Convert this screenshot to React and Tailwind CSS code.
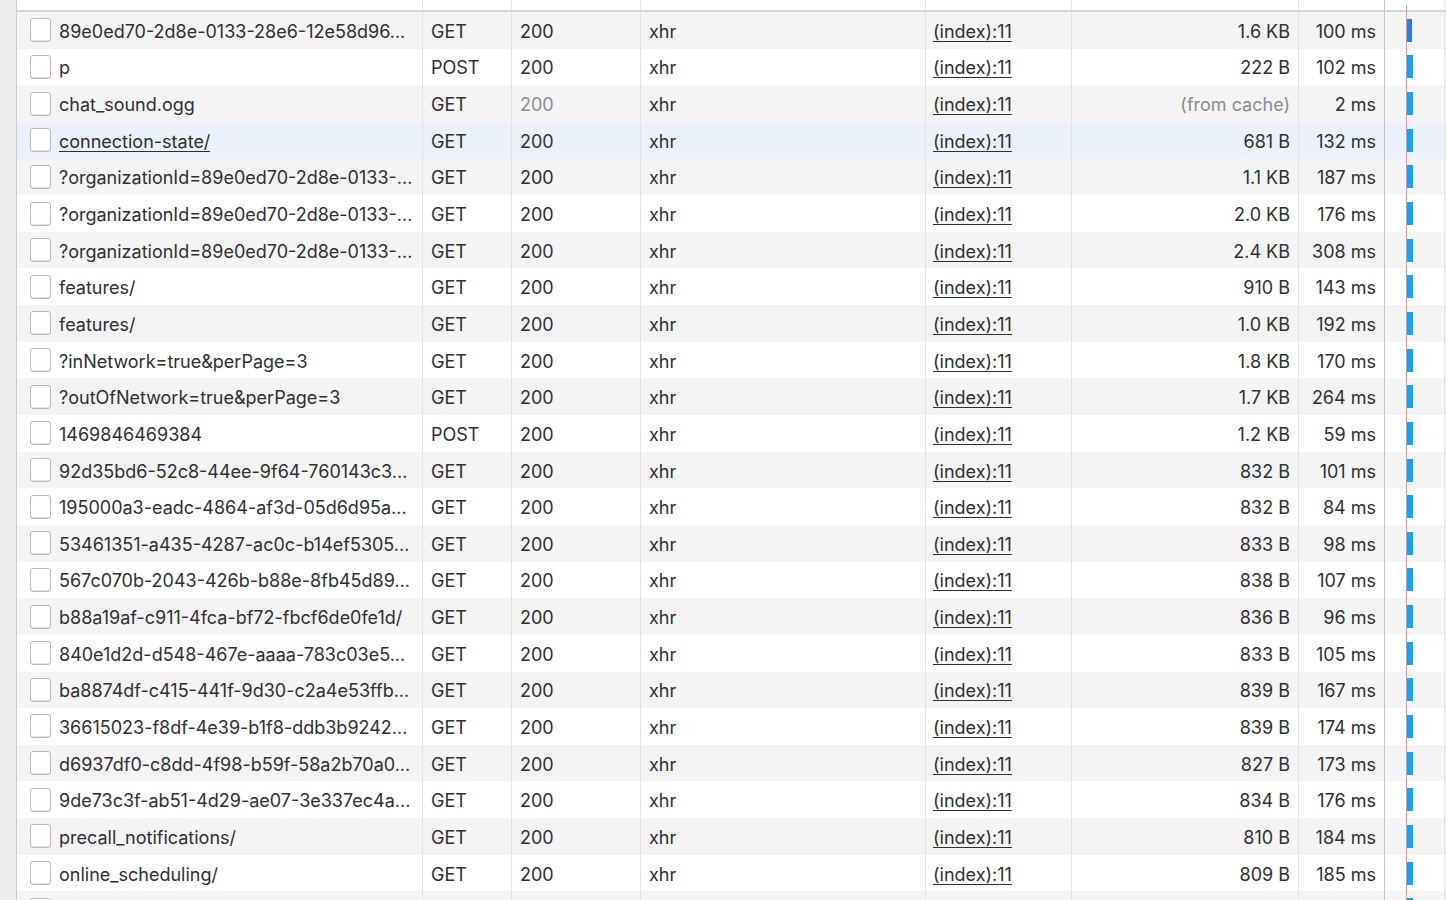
import React from "react";

const rows = [
  ["89e0ed70-2d8e-0133-28e6-12e58d96...", "GET", "200", "1.6 KB", "100 ms"],
  ["p", "POST", "200", "222 B", "102 ms"],
  ["chat_sound.ogg", "GET", "200", "(from cache)", "2 ms"],
  ["connection-state/", "GET", "200", "681 B", "132 ms"],
  ["?organizationId=89e0ed70-2d8e-0133-...", "GET", "200", "1.1 KB", "187 ms"],
  ["?organizationId=89e0ed70-2d8e-0133-...", "GET", "200", "2.0 KB", "176 ms"],
  ["?organizationId=89e0ed70-2d8e-0133-...", "GET", "200", "2.4 KB", "308 ms"],
  ["features/", "GET", "200", "910 B", "143 ms"],
  ["features/", "GET", "200", "1.0 KB", "192 ms"],
  ["?inNetwork=true&perPage=3", "GET", "200", "1.8 KB", "170 ms"],
  ["?outOfNetwork=true&perPage=3", "GET", "200", "1.7 KB", "264 ms"],
  ["1469846469384", "POST", "200", "1.2 KB", "59 ms"],
  ["92d35bd6-52c8-44ee-9f64-760143c3...", "GET", "200", "832 B", "101 ms"],
  ["195000a3-eadc-4864-af3d-05d6d95a...", "GET", "200", "832 B", "84 ms"],
  ["53461351-a435-4287-ac0c-b14ef5305...", "GET", "200", "833 B", "98 ms"],
  ["567c070b-2043-426b-b88e-8fb45d89...", "GET", "200", "838 B", "107 ms"],
  ["b88a19af-c911-4fca-bf72-fbcf6de0fe1d/", "GET", "200", "836 B", "96 ms"],
  ["840e1d2d-d548-467e-aaaa-783c03e5...", "GET", "200", "833 B", "105 ms"],
  ["ba8874df-c415-441f-9d30-c2a4e53ffb...", "GET", "200", "839 B", "167 ms"],
  ["36615023-f8df-4e39-b1f8-ddb3b9242...", "GET", "200", "839 B", "174 ms"],
  ["d6937df0-c8dd-4f98-b59f-58a2b70a0...", "GET", "200", "827 B", "173 ms"],
  ["9de73c3f-ab51-4d29-ae07-3e337ec4a...", "GET", "200", "834 B", "176 ms"],
  ["precall_notifications/", "GET", "200", "810 B", "184 ms"],
  ["online_scheduling/", "GET", "200", "809 B", "185 ms"],
  ["", "", "", "", ""],
];

function Checkbox() {
  return (
    <span className="block w-[21px] h-[24px] shrink-0 rounded-[3px] border border-[#b9b9b9] bg-white shadow-[inset_0_-1px_0_#e2e2e2]" />
  );
}

function Row({ r, i }) {
  const [name, method, status, size, time] = r;
  const empty = name === "";
  const bg =
    i === 3 ? "bg-[#ebf1fa]" : i % 2 === 0 ? "bg-[#f4f4f4]" : "bg-white";
  const cell = "h-full flex items-center border-r border-[#e2e2e2] shrink-0";
  const cached = i === 2;
  return (
    <div className={`flex h-[36.65px] shrink-0 ${bg}`}>
      <div className={`${cell} w-[406px] pl-[13px] gap-[8px]`}>
        <Checkbox />
        {!empty && (
          <span className={`truncate pt-[2px] ${i === 3 ? "underline underline-offset-[3px]" : ""}`}>{name}</span>
        )}
      </div>
      <div className={`${cell} w-[89px] pl-[8px] pt-[2px]`}>{method}</div>
      <div className={`${cell} w-[129px] pl-[8px] pt-[2px] ${cached ? "text-[#8c8c8c]" : ""}`}>{status}</div>
      <div className={`${cell} w-[285px] pl-[8px] pt-[2px]`}>{empty ? "" : "xhr"}</div>
      <div className={`${cell} w-[146px] pl-[7px] pt-[2px]`}>
        {!empty && <span className="underline underline-offset-[3px]">(index):11</span>}
      </div>
      <div className={`${cell} w-[227px] justify-end pr-[8px] pt-[2px] ${cached ? "text-[#8c8c8c]" : ""}`}>{size}</div>
      <div className="h-full flex items-center shrink-0 w-[86px] justify-end pr-[8px] pt-[2px] border-r border-[#c4c4c4]">{time}</div>
      <div className="h-full flex items-center w-[60px] shrink-0 border-r border-[#e2e2e2] pl-[22px]">
        <span className={`block w-[6px] h-[23px] ${i === 0 ? "bg-[#2c7fdc] -ml-[1px]" : "bg-[#14a4f4]"}`} />
      </div>
    </div>
  );
}

export default function App() {
  return (
    <div
      className="w-[1446px] h-[900px] overflow-hidden flex bg-white text-[18px] text-[#303030]"
      style={{ fontFamily: "Inter, 'Noto Sans', sans-serif" }}
    >
      <div className="w-[17px] h-full shrink-0 bg-[#ececec] border-r border-[#cdcdcd]" />
      <div className="relative flex flex-col flex-1">
        <div className="flex h-[12px] shrink-0 border-b-2 border-[#d6d6d6]">
          <div className="w-[406px] h-full border-r border-[#e2e2e2]" />
          <div className="w-[89px] h-full border-r border-[#e2e2e2]" />
          <div className="w-[129px] h-full border-r border-[#e2e2e2]" />
          <div className="w-[285px] h-full border-r border-[#e2e2e2]" />
          <div className="w-[146px] h-full border-r border-[#e2e2e2]" />
          <div className="w-[227px] h-full border-r border-[#e2e2e2]" />
          <div className="w-[86px] h-full border-r border-[#c4c4c4]" />
          <div className="w-[60px] h-full border-r border-[#e2e2e2]" />
        </div>
        {rows.map((r, i) => (
          <Row key={i} r={r} i={i} />
        ))}
        {/* load marker */}
        <div className="absolute left-[1389px] top-[5px] bottom-0 w-px bg-[#f48a8a]" />
      </div>
    </div>
  );
}
